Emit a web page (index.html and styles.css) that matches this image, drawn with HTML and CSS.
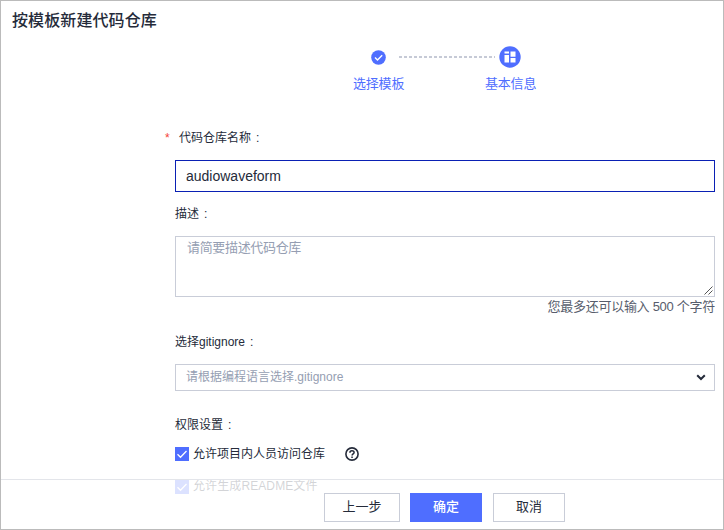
FILE: index.html
```html
<!DOCTYPE html>
<html lang="zh-CN">
<head>
<meta charset="utf-8">
<title>按模板新建代码仓库</title>
<link rel="stylesheet" href="styles.css">
</head>
<body>
<main class="page">
  <h1 class="title">按模板新建代码仓库</h1>
  <div class="steps">
    <div class="step">
      <div class="step-icon">
        <svg width="15" height="15" viewBox="0 0 15 15"><circle cx="7.5" cy="7.5" r="7.3" fill="#4f6eff"/><path d="M4 7.4l2.5 2.5 4.7-4.7" fill="none" stroke="#fff" stroke-width="1.4"/></svg>
      </div>
      <span>选择模板</span>
    </div>
    <svg class="step-line" width="96" height="2" viewBox="0 0 96 2"><path d="M0 1h96" stroke="#c6cad6" stroke-width="2" stroke-dasharray="3 2"/></svg>
    <div class="step">
      <div class="step-icon">
        <svg width="22" height="22" viewBox="0 0 22 22"><circle cx="11" cy="11" r="10.7" fill="#4f6eff"/><path d="M5.5 5.5h4.5v2H5.5zM5.5 9H10v7.5H5.5zM11.5 5.5h5v5.2h-5zM11.5 12h5v4.5h-5z" fill="#fff"/></svg>
      </div>
      <span>基本信息</span>
    </div>
  </div>
  <form class="form">
    <div class="label label-required"><span class="star">*</span>代码仓库名称<span class="colon">:</span></div>
    <div class="input">audiowaveform</div>
    <div class="label label-desc">描述<span class="colon">:</span></div>
    <div class="textarea">请简要描述代码仓库
      <svg class="grip" width="9" height="9" viewBox="0 0 9 9"><path d="M0.5 8.5l8-8M4.5 8.5l4-4" stroke="#555" fill="none"/></svg>
    </div>
    <div class="hint">您最多还可以输入 500 个字符</div>
    <div class="label label-ignore">选择gitignore<span class="colon">:</span></div>
    <div class="select"><span>请根据编程语言选择.gitignore</span>
      <svg width="10" height="7" viewBox="0 0 10 7"><path d="M1.2 1.2L5 5l3.8-3.8" fill="none" stroke="#252b3a" stroke-width="2"/></svg>
    </div>
    <div class="label label-perm">权限设置<span class="colon">:</span></div>
    <div class="check">
      <svg width="14" height="14" viewBox="0 0 14 14"><path d="M0 0h14v14H0z" fill="#4f6eff"/><path d="M2.5 7.3l3 3 6-6.3" fill="none" stroke="#fff" stroke-width="1.3"/></svg>
      <span>允许项目内人员访问仓库</span>
      <svg class="help" width="14" height="14" viewBox="0 0 14 14"><circle cx="7" cy="7" r="6.1" fill="none" stroke="#252b3a" stroke-width="1.6"/><path d="M4.9 5.7c0-2.7 4.2-2.6 4.2-.2 0 1.4-2 1.4-2 3" fill="none" stroke="#252b3a" stroke-width="1.5"/><path d="M6.3 9.4h1.5v1.5H6.3z" fill="#252b3a"/></svg>
    </div>
    <div class="check check-readme">
      <svg width="14" height="14" viewBox="0 0 14 14"><path d="M0 0h14v14H0z" fill="#4f6eff"/><path d="M2.5 7.3l3 3 6-6.3" fill="none" stroke="#fff" stroke-width="1.3"/></svg>
      <span>允许生成README文件</span>
    </div>
  </form>
  <footer class="footer">
    <div class="btn btn-prev">上一步</div>
    <div class="btn btn-ok">确定</div>
    <div class="btn btn-cancel">取消</div>
  </footer>
</main>
</body>
</html>
```
FILE: styles.css
```css
* { box-sizing: border-box; }
body {
  margin: 0;
  font-family: "Liberation Sans", "Noto Sans CJK SC", sans-serif;
  font-size: 12px;
  color: #252b3a;
}
svg { display: block; flex: none; }
.page {
  position: relative;
  width: 724px;
  height: 530px;
  border: 1px solid #bbb;
  background: #fff;
  overflow: hidden;
}
.title {
  margin: 8px 0 0 11px;
  font-size: 16px;
  line-height: 24px;
  letter-spacing: .1px;
  font-weight: 500;
}
.steps {
  display: flex;
  margin: 12px 0 0 352px;
  color: #4f6eff;
  font-size: 13px;
}
.step { width: 52px; line-height: 20px; letter-spacing: -.2px; white-space: nowrap; }
.step-icon {
  display: flex;
  align-items: center;
  justify-content: center;
  height: 24px;
  margin: 0 2px 5px 0;
}
.step-line { margin: 11px -10px 0 -6px; }
.form { margin: 34px 8px 0 174px; }
.label { line-height: 20px; height: 20px; white-space: nowrap; }
.colon { margin-left: 5px; }
.label-required { margin-left: -10px; }
.star { display: inline-block; width: 14px; color: #f44336; }
.input {
  height: 32px;
  margin-top: 12px;
  padding-left: 10px;
  border: 1px solid #0a20b4;
  font-size: 14px;
  line-height: 30px;
}
.label-desc { margin-top: 12px; }
.textarea {
  position: relative;
  height: 61px;
  margin-top: 12px;
  padding: 1px 11px;
  border: 1px solid #c9cdd8;
  color: #959eb2;
  font-size: 13px;
  letter-spacing: -.33px;
  line-height: 20px;
}
.grip { position: absolute; right: 1px; bottom: 1px; }
.hint {
  height: 20px;
  line-height: 19px;
  text-align: right;
  color: #575d6c;
  font-size: 13px;
  letter-spacing: -.28px;
}
.label-ignore { margin-top: 15px; }
.select {
  display: flex;
  align-items: center;
  justify-content: space-between;
  height: 27px;
  margin-top: 12px;
  padding: 0 8px 0 10px;
  border: 1px solid #c9cdd8;
  line-height: 20px;
  color: #959eb2;
}
.select span { padding-bottom: 1px; }
.label-perm { margin-top: 24px; }
.check {
  display: flex;
  align-items: center;
  gap: 4px;
  height: 20px;
  margin-top: 9px;
}
.check span { line-height: 18px; }
.help { margin-left: 16px; }
.check-readme { margin-top: 13px; }
.check-readme span { padding-bottom: 2px; letter-spacing: .1px; }
.footer {
  position: absolute;
  left: 0;
  right: 0;
  bottom: 0;
  display: flex;
  height: 50px;
  padding: 13px 0 0 323px;
  border-top: 1px solid #e3e5ea;
  background: rgba(255, 255, 255, .8);
}
.btn {
  width: 72px;
  height: 29px;
  border: 1px solid #c9cdd8;
  background: #fff;
  font-size: 13px;
  line-height: 26px;
  text-align: center;
}
.btn-prev { width: 76px; }
.btn-ok {
  margin: 0 11px 0 10px;
  border-color: #4f6eff;
  background: #4f6eff;
  color: #fff;
  font-weight: 500;
}
```
